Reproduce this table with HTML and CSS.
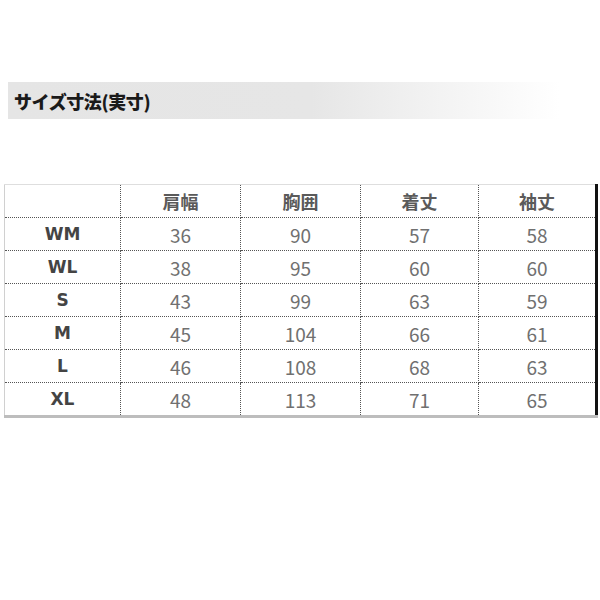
FILE: index.html
```html
<!DOCTYPE html>
<html lang="ja">
<head>
<meta charset="utf-8">
<title>サイズ寸法</title>
<link rel="stylesheet" href="styles.css">
</head>
<body>
<div class="title-bar"><span class="title">サイズ寸法(実寸)</span></div>
<table class="size-table">
  <colgroup>
    <col class="c-label"><col class="c-val"><col class="c-val"><col class="c-val2"><col class="c-val2">
  </colgroup>
  <thead>
    <tr><th></th><th>肩幅</th><th>胸囲</th><th>着丈</th><th>袖丈</th></tr>
  </thead>
  <tbody>
    <tr><th>WM</th><td>36</td><td>90</td><td>57</td><td>58</td></tr>
    <tr><th>WL</th><td>38</td><td>95</td><td>60</td><td>60</td></tr>
    <tr><th>S</th><td>43</td><td>99</td><td>63</td><td>59</td></tr>
    <tr><th>M</th><td>45</td><td>104</td><td>66</td><td>61</td></tr>
    <tr><th>L</th><td>46</td><td>108</td><td>68</td><td>63</td></tr>
    <tr><th>XL</th><td>48</td><td>113</td><td>71</td><td>65</td></tr>
  </tbody>
</table>
</body>
</html>
```
FILE: styles.css
```css
html, body {
  margin: 0;
  padding: 0;
  background: #ffffff;
}
body {
  font-family: "Noto Sans CJK JP", "Noto Sans", sans-serif;
  padding-top: 82px;
}
.title-bar {
  margin-left: 8px;
  width: 552px;
  height: 37px;
  display: flex;
  align-items: center;
  background: linear-gradient(to right, #e5e5e5 0%, #e6e6e6 55%, #ffffff 100%);
}
.title {
  margin-left: 6px;
  font-size: 18px;
  font-weight: 900;
  color: #1a1a1a;
  letter-spacing: -0.4px;
}
.size-table {
  margin-top: 65px;
  margin-left: 4px;
  width: 594px;
  border-collapse: collapse;
  table-layout: fixed;
  border-top: 1px solid #dedede;
  border-left: 1px solid #d0d0d0;
  border-right: 3px solid #111111;
  border-bottom: 3px solid #bdbdbd;
}
.c-label { width: 116px; }
.c-val { width: 120px; }
.c-val2 { width: 118px; }
.size-table th,
.size-table td {
  height: 32px;
  padding: 0;
  text-align: center;
  vertical-align: middle;
  border: 1px dotted #555555;
  font-size: 18px;
  line-height: 1;
}
.size-table thead th {
  font-weight: 700;
  color: #5a5a5a;
}
.size-table tbody th {
  font-weight: 700;
  color: #444444;
  font-family: "DejaVu Sans", "Noto Sans", sans-serif;
  font-size: 17px;
}
.size-table td {
  color: #707070;
  font-weight: 400;
  font-size: 19px;
}
```
